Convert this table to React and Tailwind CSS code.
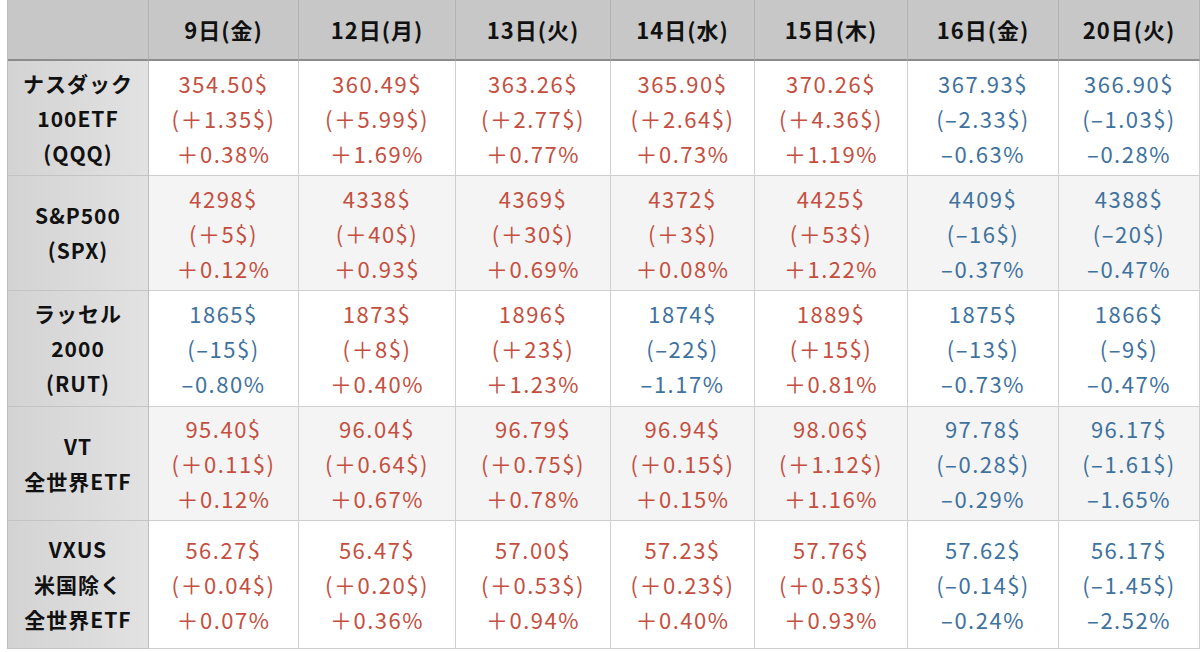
import React from "react";

const DAYS = ["9日(金)", "12日(月)", "13日(火)", "14日(水)", "15日(木)", "16日(金)", "20日(火)"];

// u = up (red), d = down (blue)
const ROWS = [
  {
    label: ["ナスダック", "100ETF", "(QQQ)"],
    h: "h-[115px]",
    cells: [
      ["354.50$", "(＋1.35$)", "＋0.38%", "u"],
      ["360.49$", "(＋5.99$)", "＋1.69%", "u"],
      ["363.26$", "(＋2.77$)", "＋0.77%", "u"],
      ["365.90$", "(＋2.64$)", "＋0.73%", "u"],
      ["370.26$", "(＋4.36$)", "＋1.19%", "u"],
      ["367.93$", "(–2.33$)", "–0.63%", "d"],
      ["366.90$", "(–1.03$)", "–0.28%", "d"],
    ],
  },
  {
    label: ["S&P500", "(SPX)"],
    h: "h-[115px]",
    shade: true,
    cells: [
      ["4298$", "(＋5$)", "＋0.12%", "u"],
      ["4338$", "(＋40$)", "＋0.93$", "u"],
      ["4369$", "(＋30$)", "＋0.69%", "u"],
      ["4372$", "(＋3$)", "＋0.08%", "u"],
      ["4425$", "(＋53$)", "＋1.22%", "u"],
      ["4409$", "(–16$)", "–0.37%", "d"],
      ["4388$", "(–20$)", "–0.47%", "d"],
    ],
  },
  {
    label: ["ラッセル", "2000", "(RUT)"],
    h: "h-[116px]",
    cells: [
      ["1865$", "(–15$)", "–0.80%", "d"],
      ["1873$", "(＋8$)", "＋0.40%", "u"],
      ["1896$", "(＋23$)", "＋1.23%", "u"],
      ["1874$", "(–22$)", "–1.17%", "d"],
      ["1889$", "(＋15$)", "＋0.81%", "u"],
      ["1875$", "(–13$)", "–0.73%", "d"],
      ["1866$", "(–9$)", "–0.47%", "d"],
    ],
  },
  {
    label: ["VT", "全世界ETF"],
    h: "h-[114px]",
    shade: true,
    cells: [
      ["95.40$", "(＋0.11$)", "＋0.12%", "u"],
      ["96.04$", "(＋0.64$)", "＋0.67%", "u"],
      ["96.79$", "(＋0.75$)", "＋0.78%", "u"],
      ["96.94$", "(＋0.15$)", "＋0.15%", "u"],
      ["98.06$", "(＋1.12$)", "＋1.16%", "u"],
      ["97.78$", "(–0.28$)", "–0.29%", "d"],
      ["96.17$", "(–1.61$)", "–1.65%", "d"],
    ],
  },
  {
    label: ["VXUS", "米国除く", "全世界ETF"],
    h: "h-[128px]",
    cells: [
      ["56.27$", "(＋0.04$)", "＋0.07%", "u"],
      ["56.47$", "(＋0.20$)", "＋0.36%", "u"],
      ["57.00$", "(＋0.53$)", "＋0.94%", "u"],
      ["57.23$", "(＋0.23$)", "＋0.40%", "u"],
      ["57.76$", "(＋0.53$)", "＋0.93%", "u"],
      ["57.62$", "(–0.14$)", "–0.24%", "d"],
      ["56.17$", "(–1.45$)", "–2.52%", "d"],
    ],
  },
];

const font = { fontFamily: '"Noto Sans CJK JP", "Noto Sans", sans-serif' };

export default function App() {
  return (
    <div className="w-[1200px] h-[652px] overflow-hidden bg-white pl-[7px]" style={font}>
      <div className="grid grid-cols-[141px_150px_157px_155px_144px_153px_151px_1fr] border-l border-[#bdbdbd]">
        {/* header */}
        <div className="h-[61px] bg-[#c7c7c7] border-b-2 border-[#8c8c8c] border-r border-r-[#b3b3b3]" />
        {DAYS.map((d) => (
          <div
            key={d}
            className="h-[61px] bg-[#c7c7c7] border-b-2 border-[#8c8c8c] border-r border-r-[#b3b3b3] flex items-center justify-center text-[22px] tracking-[1px] font-bold text-[#111]"
          >
            {d}
          </div>
        ))}

        {ROWS.map((r, ri) => (
          <React.Fragment key={ri}>
            <div
              className={`${r.h} bg-gradient-to-r from-[#d3d3d3] to-[#e2e2e2] border-b border-[#c4c4c4] border-r border-r-[#bdbdbd] flex flex-col items-center justify-center text-[21px] leading-[35px] tracking-[1px] font-bold text-[#111]`}
            >
              {r.label.map((l) => (
                <span key={l}>{l}</span>
              ))}
            </div>
            {r.cells.map((c, ci) => (
              <div
                key={ci}
                className={`${r.h} ${r.shade ? "bg-[#f4f4f4]" : "bg-white"} border-b border-[#cfcfcf] border-r border-r-[#d0d0d0] flex flex-col items-center justify-center text-[22px] leading-[35px] tracking-[1.5px] ${
                  c[3] === "u" ? "text-[#c44f40]" : "text-[#40729e]"
                }`}
              >
                <span>{c[0]}</span>
                <span>{c[1]}</span>
                <span>{c[2]}</span>
              </div>
            ))}
          </React.Fragment>
        ))}
      </div>
    </div>
  );
}
